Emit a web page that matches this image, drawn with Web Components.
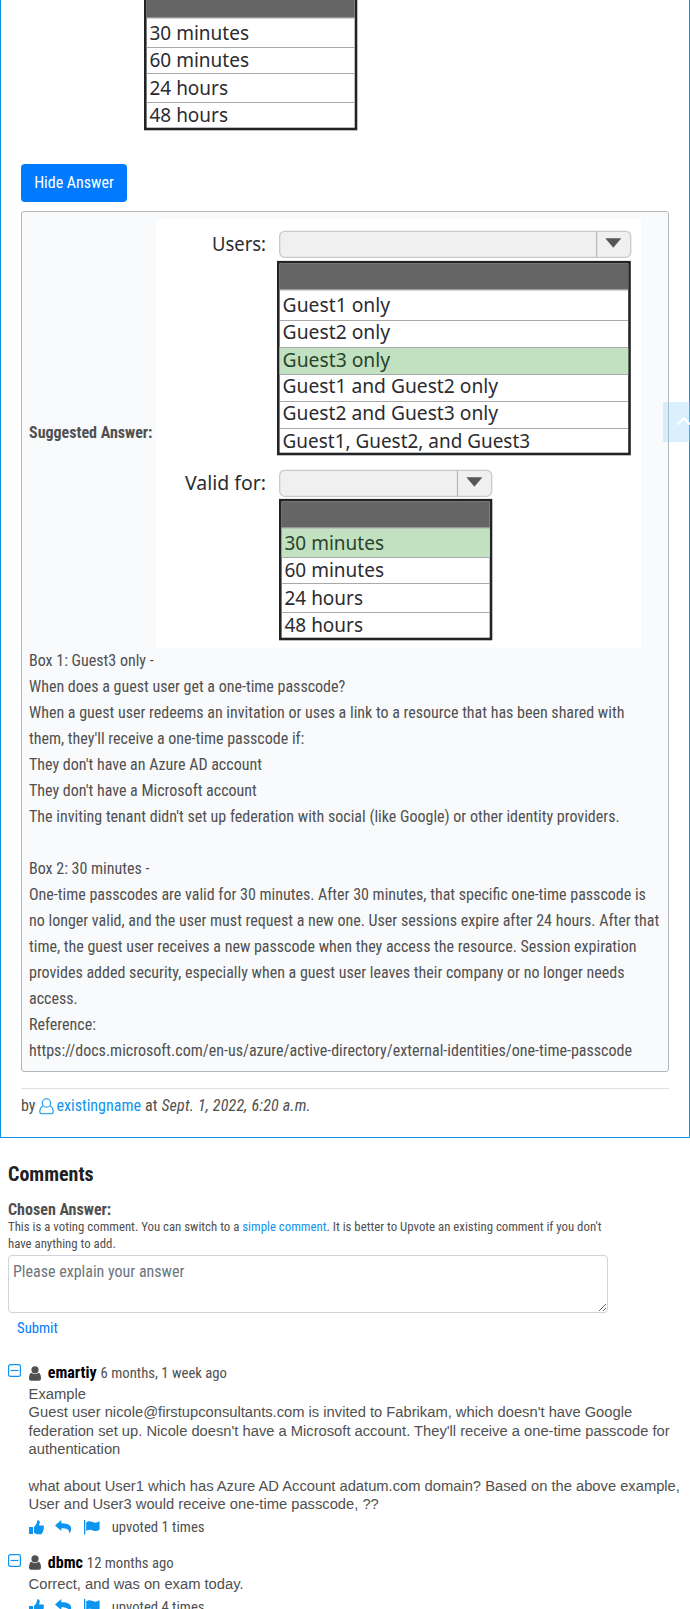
<!DOCTYPE html>
<html lang="en"><head><meta charset="utf-8"><title>Discussion</title>
<style>
html{background:#fff}
body{margin:0;width:690px;height:1609px;overflow:hidden;position:relative;font-family:"Roboto Condensed",Roboto,sans-serif;font-stretch:75%;font-size:16px;line-height:26px;color:#505050}
</style></head><body>
<question-card>
  <dropdown-figure slot="question" part-only></dropdown-figure>
  <answer-box slot="answer">
    <dropdown-figure slot="figure" marked></dropdown-figure>
    <div>Box 1: Guest3 only -<br>When does a guest user get a one-time passcode?<br>When a guest user redeems an invitation or uses a link to a resource that has been shared with<br>them, they'll receive a one-time passcode if:<br>They don't have an Azure AD account<br>They don't have a Microsoft account<br>The inviting tenant didn't set up federation with social (like Google) or other identity providers.<br><br>Box 2: 30 minutes -<br>One-time passcodes are valid for 30 minutes. After 30 minutes, that specific one-time passcode is<br>no longer valid, and the user must request a new one. User sessions expire after 24 hours. After that<br>time, the guest user receives a new passcode when they access the resource. Session expiration<br>provides added security, especially when a guest user leaves their company or no longer needs<br>access.<br>Reference:<br>https://docs.microsoft.com/en-us/azure/active-directory/external-identities/one-time-passcode</div>
  </answer-box>
</question-card>
<comment-form></comment-form>
<user-comment name="emartiy" when="6 months, 1 week ago" votes="1">Example<br>Guest user nicole@firstupconsultants.com is invited to Fabrikam, which doesn't have Google<br>federation set up. Nicole doesn't have a Microsoft account. They'll receive a one-time passcode for<br>authentication<br><br>what about User1 which has Azure AD Account adatum.com domain? Based on the above example,<br>User and User3 would receive one-time passcode, ??</user-comment>
<user-comment name="dbmc" when="12 months ago" votes="4">Correct, and was on exam today.</user-comment>
<scroll-top></scroll-top>
<script>
function define(name, render) {
  customElements.define(name, class extends HTMLElement {
    connectedCallback() {
      if (this.shadowRoot) return;
      this.attachShadow({mode: 'open'}).innerHTML = render(this);
    }
  });
}

const label = (x, y, w, s, fill = '#2b2b30') =>
  `<text x="${x}" y="${y}" textLength="${w}" lengthAdjust="spacingAndGlyphs" fill="${fill}">${s}</text>`;
const rule = (x1, x2, y) => `<path d="M${x1} ${y}H${x2}" stroke="#a9a9a9"/>`;

function select(x, y, w, split, mid) {
  return `<rect x="${x}" y="${y}" width="${w}" height="26" rx="5" fill="#f0f0f0" stroke="#c9c9c9" stroke-width="1.3"/>
    <path d="M${split} ${y}v26" stroke="#b5b5b5" stroke-width="1.2"/>
    <path d="M${mid - 8} ${y + 7}h16l-8 9.5z" fill="#575757"/>`;
}

function usersPart() {
  return `${label(56, 31.7, 54, 'Users:')}
    ${select(123.7, 12.3, 351, 440.6, 457.3)}
    <rect x="122.3" y="43.2" width="351.2" height="191.8" fill="#fff" stroke="#212325" stroke-width="2.6"/>
    <rect x="123.6" y="44.4" width="348.6" height="26.3" fill="#656565"/>
    <rect x="123.6" y="128.5" width="348.6" height="27" fill="#c2e1c1"/>
    ${[71, 101.5, 128.5, 155.5, 182.5, 209.5].map(y => rule(123.6, 472.2, y)).join('')}
    ${label(126.6, 93, 107.5, 'Guest1 only')}
    ${label(126.6, 119.7, 107.5, 'Guest2 only')}
    ${label(126.6, 147.5, 107.5, 'Guest3 only', '#28432b')}
    ${label(126.6, 174.4, 215.5, 'Guest1 and Guest2 only')}
    ${label(126.6, 201.2, 215.5, 'Guest2 and Guest3 only')}
    ${label(126.6, 229, 247.5, 'Guest1, Guest2, and Guest3')}
    ${label(29, 271.2, 81, 'Valid for:')}
    ${select(123.7, 251.3, 212, 301.5, 318.4)}`;
}

define('dropdown-figure', el => {
  const marked = el.hasAttribute('marked');
  const part = el.hasAttribute('part-only');
  const view = part ? '0 291 485 138' : '0 0 485 429';
  return `<style>
    :host{display:block;width:485px;flex:none}
    svg{display:block;width:485px;font:20.5px "Noto Sans","Open Sans",sans-serif;font-stretch:100%}
  </style>
  <svg viewBox="${view}" height="${view.split(' ')[3]}">
    <rect width="485" height="429" fill="#fff"/>
    ${part ? '' : usersPart()}
    <rect x="124.3" y="281.2" width="210.7" height="138.8" fill="#fff" stroke="#212325" stroke-width="2.6"/>
    <rect x="125.6" y="282.4" width="208.1" height="26.4" fill="#656565"/>
    ${marked ? '<rect x="125.6" y="309" width="208.1" height="29" fill="#c2e1c1"/>' : ''}
    ${[309, 338.5, 364.5, 393.5].map(y => rule(125.6, 333.7, y)).join('')}
    ${label(128.5, 331.2, 99.5, '30 minutes', marked ? '#28432b' : undefined)}
    ${label(128.5, 358, 99.5, '60 minutes')}
    ${label(128.5, 386, 78.5, '24 hours')}
    ${label(128.5, 412.7, 78.5, '48 hours')}
  </svg>`;
});

define('question-card', () => `<style>
  :host{display:block;box-sizing:border-box;height:1138px;border:1px solid #0d94e6;border-top:0;padding:0 20px}
  button{display:block;width:106px;height:38px;margin:26px 0 9px;padding:0;border:0;border-radius:4px;background:#007bff;color:#fff;font:inherit;font-stretch:inherit;line-height:36px}
  footer{border-top:1px solid #dee2e6;margin-top:16px;padding-top:4px;display:flex;gap:4px}
  a{color:#0d94ef;display:flex;gap:2px;align-items:center}
  em{letter-spacing:.2px}
</style>
<slot name="question"></slot>
<button>Hide Answer</button>
<slot name="answer"></slot>
<footer><span>by</span><a><svg width="15" height="17" viewBox="0 0 15 17" fill="none" stroke="#0d94ef" stroke-width="1.1"><path d="M4 8.1C1.8 9 .9 11 .8 13.7c0 1.3.7 2 1.8 2h9.8c1.1 0 1.8-.7 1.8-2C14.1 11 13.2 9 11 8.1"/><circle cx="7.5" cy="5" r="4.2"/></svg>existingname</a><span>at</span><em>Sept. 1, 2022, 6:20 a.m.</em></footer>`);

define('answer-box', () => `<style>
  :host{display:block;box-sizing:border-box;height:861px;border:1px solid #b2b6b9;border-radius:3px;padding:7px;background:#f8fafc}
  .figure{display:flex;align-items:center;justify-content:space-between;width:612px}
  b{margin-bottom:2px}
</style><div class="figure"><b>Suggested Answer:</b><slot name="figure"></slot></div><slot></slot>`);

define('comment-form', () => `<style>
  :host{display:block;box-sizing:border-box;height:223px;padding:23px 8px 0;width:616px}
  h2{font-size:20px;line-height:26px;margin:0;color:#212121}
  b{display:block;margin-top:12px;line-height:21px}
  p{margin:-2px 0 0;font-size:12.8px;line-height:17px;white-space:nowrap}
  a{color:#0d94ef}
  textarea{display:block;box-sizing:border-box;width:600px;height:58px;margin:3px 0 0;padding:4px;border:1px solid #ced4da;border-radius:4px;font:inherit;font-stretch:inherit;line-height:24px;resize:vertical;overflow:hidden}
  textarea::placeholder{color:#6c757d;opacity:1}
  button{display:block;border:0;background:none;padding:1px 9px 0;font:inherit;font-stretch:inherit;font-size:14.72px;line-height:28px;color:#007bff}
</style>
<h2>Comments</h2><b>Chosen Answer:</b>
<p>This is a voting comment. You can switch to a <a>simple comment</a>. It is better to Upvote an existing comment if you don't<br>have anything to add.</p>
<textarea placeholder="Please explain your answer"></textarea><button>Submit</button>`);

define('user-comment', el => `<style>
  :host{display:grid;grid-template-columns:20.6px 1fr;padding:0 0 0 8px;margin-bottom:11px}
  .toggle{margin-top:3px}
  header{display:flex;align-items:center;height:24px;font-size:14.72px}
  header svg{margin-right:7.2px}
  header b{font-size:16px;color:#000;margin-right:4px}
  .text{font:14.72px/18.4px "Liberation Sans",Arial,sans-serif;white-space:nowrap;margin-bottom:1px}
  .actions{display:flex;align-items:center;height:25px;font-size:14.72px}
  .actions svg{display:block;margin-right:11.7px}
  svg{display:block;flex:none}
</style>
<svg class="toggle" width="13" height="13" viewBox="0 0 13 13" fill="none" stroke="#0d94ef"><rect x=".6" y=".6" width="11.8" height="11.8" rx="1.7" stroke-width="1.2"/><path d="M2.5 6.5h8" stroke-width="1.2"/></svg>
<div>
<header><svg width="12" height="15" viewBox="0 0 12 15" fill="#505050"><circle cx="6" cy="3.8" r="3.6"/><path d="M2.3 6.8Q6 9.7 9.7 6.8 12 8 12 12.7 12 14.8 10 14.8H2Q0 14.8 0 12.7 0 8 2.3 6.8z"/></svg><b>${el.getAttribute('name')}</b><span>${el.getAttribute('when')}</span></header>
<div class="text"><slot></slot></div>
<div class="actions">
<svg width="15" height="15" viewBox="0 0 15 15" fill="#0d94ef"><path d="M0 7h4v7H0zM5 7l2.3-2.7L8.3.7c.2-.8 2.5-.5 2.5 1.7L10 5.5h3.6c1.7 0 1.8 1.8.8 2.4.8.8.5 1.8-.4 2.2.6.9.2 1.7-.6 2.1.1 1.4-.8 2-2 2H8.2L5 13z"/></svg>
<svg width="17" height="15" viewBox="0 0 17 15" fill="#0d94ef"><path d="M0 5.5 6.3 0v3.2C13 3.2 16.2 5 16.2 9q0 2.4-2 5.1c.6-4-1.6-5.8-7.9-5.8V11z"/></svg>
<svg width="16" height="15" viewBox="0 0 16 15" fill="#0d94ef"><path d="M0 0h1.3v14.5H0zM2.2 2.4C4 .8 6.4.9 8.8 2.1c2.3 1 4 .7 6.8-.8v8.4c-2.8 1.6-4.6 1.7-6.8.7-2.2-1-4.3-1-6.6.5z"/></svg>
<span>upvoted ${el.getAttribute('votes')} times</span></div></div>`);

define('scroll-top', () => `<style>
  :host{position:absolute;left:663px;top:402px;width:27px;height:40px;background:rgba(153,214,248,.36);overflow:hidden}
  svg{display:block}
</style><svg width="40" height="40" viewBox="0 0 40 40"><path d="m14.5 22.5 6.3-6.3 6.3 6.3" fill="none" stroke="#fff" stroke-width="2.2"/></svg>`);
</script>
</body></html>
